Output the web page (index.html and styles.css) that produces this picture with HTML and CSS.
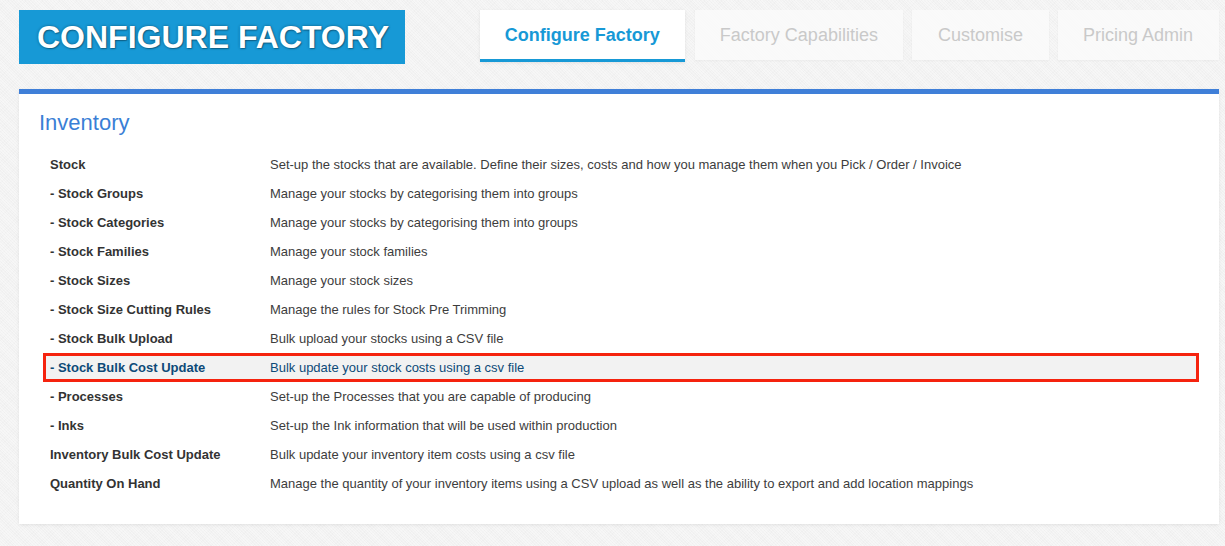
FILE: index.html
```html
<!DOCTYPE html>
<html lang="en">
<head>
<meta charset="utf-8">
<title>Configure Factory</title>
<link rel="stylesheet" href="styles.css">
</head>
<body>
<div class="page">
  <header class="header">
    <div class="logo">CONFIGURE FACTORY</div>
    <nav class="tabs">
      <a class="tab active">Configure Factory</a>
      <a class="tab">Factory Capabilities</a>
      <a class="tab">Customise</a>
      <a class="tab">Pricing Admin</a>
    </nav>
  </header>
  <section class="panel">
    <h2 class="panel-title">Inventory</h2>
    <div class="list">
      <div class="row"><span class="label">Stock</span><span class="desc">Set-up the stocks that are available. Define their sizes, costs and how you manage them when you Pick / Order / Invoice</span></div>
      <div class="row"><span class="label">- Stock Groups</span><span class="desc">Manage your stocks by categorising them into groups</span></div>
      <div class="row"><span class="label">- Stock Categories</span><span class="desc">Manage your stocks by categorising them into groups</span></div>
      <div class="row"><span class="label">- Stock Families</span><span class="desc">Manage your stock families</span></div>
      <div class="row"><span class="label">- Stock Sizes</span><span class="desc">Manage your stock sizes</span></div>
      <div class="row"><span class="label">- Stock Size Cutting Rules</span><span class="desc">Manage the rules for Stock Pre Trimming</span></div>
      <div class="row"><span class="label">- Stock Bulk Upload</span><span class="desc">Bulk upload your stocks using a CSV file</span></div>
      <div class="row highlight"><span class="label">- Stock Bulk Cost Update</span><span class="desc">Bulk update your stock costs using a csv file</span></div>
      <div class="row"><span class="label">- Processes</span><span class="desc">Set-up the Processes that you are capable of producing</span></div>
      <div class="row"><span class="label">- Inks</span><span class="desc">Set-up the Ink information that will be used within production</span></div>
      <div class="row"><span class="label">Inventory Bulk Cost Update</span><span class="desc">Bulk update your inventory item costs using a csv file</span></div>
      <div class="row"><span class="label">Quantity On Hand</span><span class="desc">Manage the quantity of your inventory items using a CSV upload as well as the ability to export and add location mappings</span></div>
    </div>
  </section>
</div>
</body>
</html>
```

FILE: styles.css
```css
* { box-sizing: border-box; }

html, body {
  margin: 0;
  padding: 0;
}

body {
  font-family: "Liberation Sans", Arial, sans-serif;
  background-color: #f2f2f2;
  background-image: repeating-linear-gradient(45deg, rgba(255,255,255,0.35) 0 1px, transparent 1px 2px),
                    repeating-linear-gradient(-45deg, rgba(0,0,0,0.012) 0 1px, transparent 1px 3px);
  min-height: 546px;
}

.page {
  width: 1200px;
  margin-left: 19px;
  padding-top: 10px;
}

.header {
  display: flex;
  justify-content: space-between;
  align-items: flex-start;
  height: 79px;
}

.logo {
  background: #1799d6;
  color: #fff;
  font-weight: bold;
  font-size: 32px;
  height: 54px;
  width: 386px;
  display: flex;
  align-items: center;
  padding-left: 18px;
  text-shadow: 0 0 3px rgba(0,0,0,0.4), 1px 1px 1px rgba(0,0,0,0.25);
}

.tabs {
  display: flex;
  gap: 9px;
}

.tab {
  display: flex;
  align-items: center;
  justify-content: center;
  height: 50px;
  padding: 0 25px;
  font-size: 18px;
  color: #c9c9c9;
  background: rgba(250,250,250,0.85);
  box-shadow: 0 1px 2px rgba(0,0,0,0.04);
}

.tab:nth-child(3) { padding: 0 26px; }
.tab:nth-child(4) { padding: 0 26px 0 25px; }

.tab.active {
  height: 52px;
  background: #fff;
  color: #1799d6;
  font-weight: bold;
  border-bottom: 3px solid #1799d6;
  padding-top: 1px;
  margin-right: 1px;
  box-shadow: 0 1px 3px rgba(0,0,0,0.08);
}

.panel {
  background: #fff;
  border-top: 5px solid #3f7fd8;
  box-shadow: 0 1px 3px rgba(0,0,0,0.08);
  padding: 15px 20px 26px 25px;
}

.panel-title {
  margin: 0 0 13px -5px;
  font-size: 22px;
  line-height: 28px;
  font-weight: normal;
  color: #3a7fd6;
}

.list {
  display: flex;
  flex-direction: column;
}

.row {
  display: grid;
  grid-template-columns: 220px 1fr;
  align-items: center;
  height: 29px;
  padding-left: 6px;
  font-size: 13px;
}

.label {
  font-weight: bold;
  color: #333;
}

.desc {
  color: #3d3d3d;
}

.row.highlight {
  background: #f2f2f2;
  border: 3px solid #f5230e;
  padding-left: 4px;
  margin-left: -1px;
}

.row.highlight .label,
.row.highlight .desc {
  color: #0d4a78;
}

.row.highlight .label { margin-right: -2px; }
```
